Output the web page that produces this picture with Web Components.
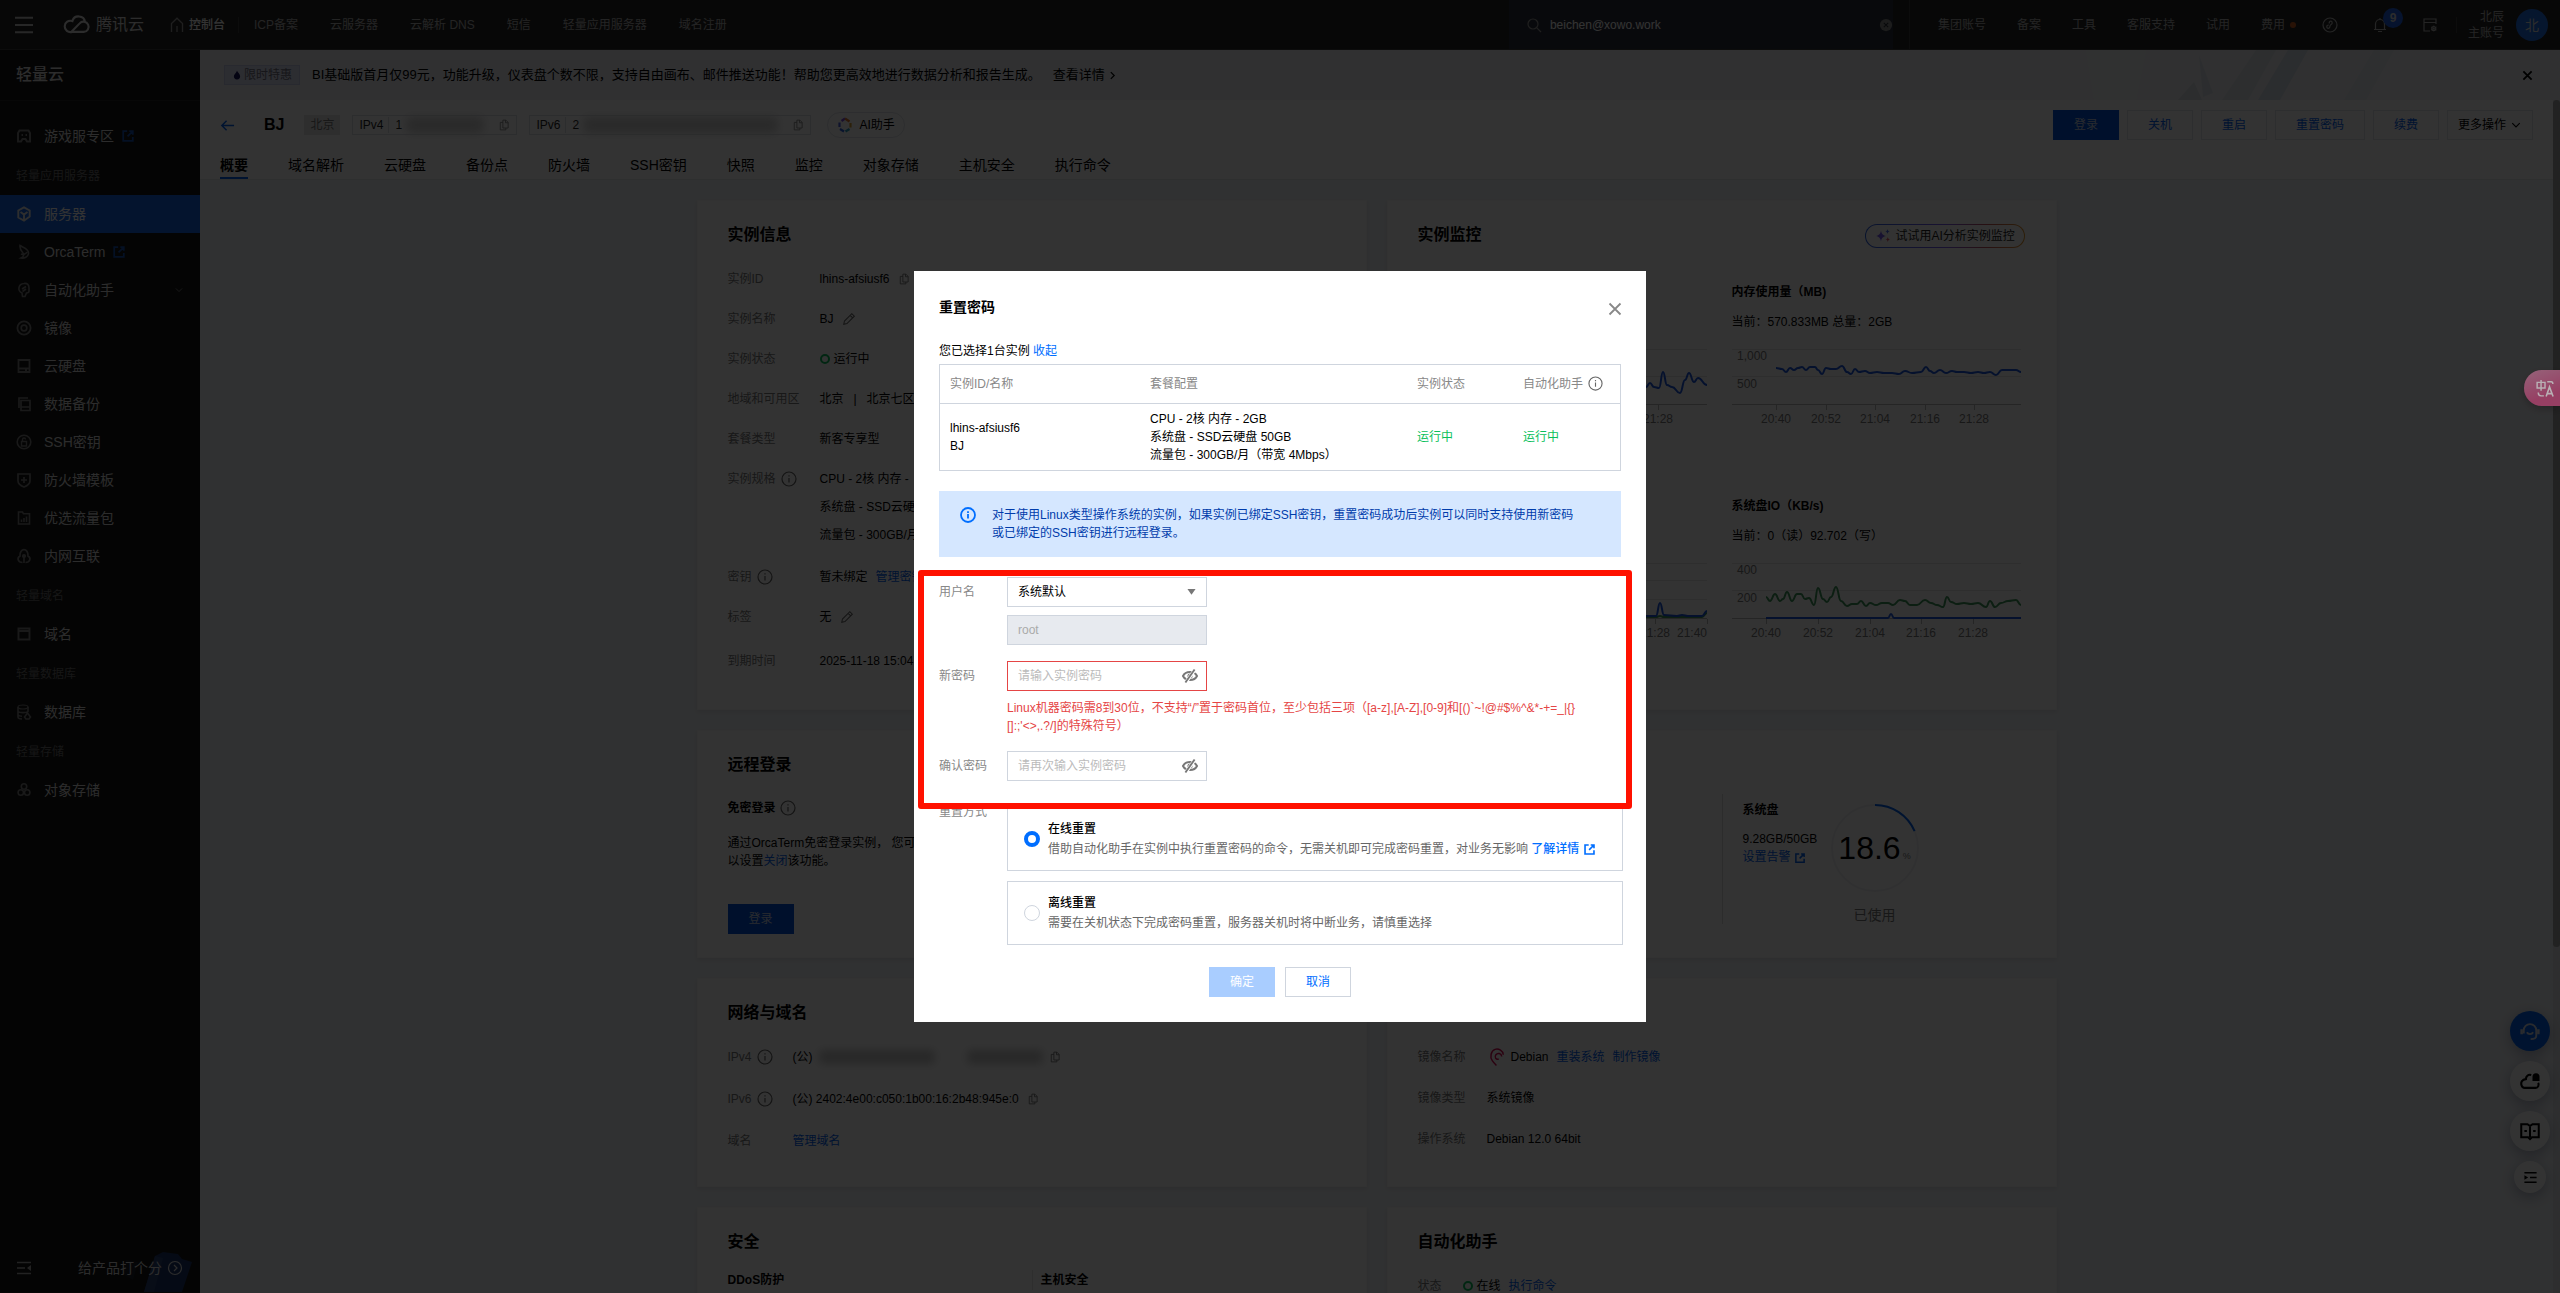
<!DOCTYPE html>
<html lang="zh-CN">
<head>
<meta charset="utf-8">
<title>轻量云 - 重置密码</title>
<style>
html,body{margin:0;height:100%;overflow:hidden}
body{font:12px/20px "Liberation Sans","Noto Sans CJK SC",sans-serif;color:#000;background:#f1f4f8}
</style>
</head>
<body>
<console-app></console-app>
<script>
const BASE = `<style>
*{box-sizing:border-box}
:host{display:block;box-sizing:border-box}
a{color:#0062f0;text-decoration:none}
button{font:inherit;cursor:pointer;margin:0}
h1,h2,h3,p,ul,dl,dd,dt{margin:0;padding:0}
ul{list-style:none}
</style>`;
function define(name, html, setup){
  const t = document.createElement('template');
  t.innerHTML = BASE + html;
  customElements.define(name, class extends HTMLElement{
    constructor(){ super(); this.attachShadow({mode:'open'}).append(t.content.cloneNode(true)); }
    connectedCallback(){ if(setup) setup(this, this.shadowRoot); }
  });
}

/* ---------- icons ---------- */
const ICONS = {
  menu:'<path d="M0 1.5h16M0 8h16M0 14.5h16" stroke-width="1.8"/>',
  home:'<path d="M2.5 15V6.5L8 1.2l5.500 5.300V15M8 9v6" stroke-width="1.3"/>',
  search:'<circle cx="7" cy="7" r="5"/><path d="M10.600 10.600L15 15"/>',
  clear:'<circle cx="8" cy="8" r="7" fill="currentColor" stroke="none"/><path d="M5.500 5.500l5 5M10.500 5.500l-5 5" stroke="#2a2e38"/>',
  compass:'<circle cx="8" cy="8" r="7"/><path d="M7.200 6.500V6c0-2.500 3-2.500 3 0 0 1.500-2.200 1.500-2.200 3 0 3-3.200 3-3.200.8 0-1.300 1-1.800 2-1.800"/>',
  bell:'<path d="M2 12.500h12M3.500 12.500V7a4.500 4.500 0 0 1 9 0v5.500M6 14.500h4M8 1v1.500"/>',
  order:'<path d="M14 7V2H2v12h6M2 5.500h12" /><circle cx="11.800" cy="11.500" r="2"/><path d="M11.800 8.500v6M9 10l5.500 3M14.500 10L9 13" stroke-width=".8"/>',
  fire:'<path d="M8 1c1 3 5 5 5 9a5 5 0 0 1-10 0c0-3 3.500-5 5-9z" fill="currentColor" stroke="none"/>',
  close:'<path d="M2.500 2.500l11 11M13.500 2.500l-11 11" stroke-width="1.800"/>',
  xbold:'<path d="M2 2l12 12M14 2L2 14" stroke-width="2.600"/>',
  back:'<path d="M15 8H2M7 3L2 8l5 5" stroke-width="1.600"/>',
  chev:'<path d="M3 5.500l5 5 5-5" stroke-width="1.500"/>',
  right:'<path d="M5 2l6 6-6 6" stroke-width="2.200"/>',
  copy:'<path d="M6.500 1.500H10.500L13.500 4.500v7.500H6.500zM10 1.500V5h3.500M6.500 4.500H3v10h7.500V12"/>',
  edit:'<path d="M2 14l.8-3.700L11.200 1.900l2.900 2.900-8.400 8.400zM9.300 3.800l2.900 2.900"/>',
  info:'<circle cx="8" cy="8" r="7"/><path d="M8 7v4.500M8 4.300v1.300"/>',
  infob:'<circle cx="8" cy="8" r="7" stroke-width="1.800"/><path d="M8 7v4.500M8 4.200V6" stroke-width="1.800"/>',
  ext:'<path d="M7 2.500H2.500v11h11V9M9.500 2.500h4v4M13.500 2.500L7.500 8.500" stroke-width="2"/>',
  eyeoff:'<path d="M1 8c2.500-5.300 11.500-5.300 14 0-2.500 5.300-11.500 5.300-14 0z" stroke-width="2"/><circle cx="8" cy="8" r="2" fill="currentColor"/><path d="M13 1.500L3.500 14.800" stroke="#fff" stroke-width="3.500"/><path d="M12.600 1.500L3.400 14.500" stroke-width="1.900"/>',
  down:'<path d="M3 5h10l-5 7z" fill="currentColor" stroke="none"/>',
  game:'<path d="M3.500 2.500h9L14 5v8.500h-3L9.500 11h-3L5 13.500H2V5z" stroke-width="2"/><path d="M5.500 7h1.500M9.500 7H11" stroke-width="2"/>',
  server:'<path d="M8 1.300l5.700 3.200v6L8 14.700l-5.700-3.200v-7zM4.500 6L8 8.500 11.500 6M8 8.500V15" stroke-width="1.900"/>',
  orca:'<path d="M4 1.500c3 2 9 3 8.500 8-.5 3.500-4 5-7.500 4.500 3-1.500 3-3 2-5C5.500 7.500 3.500 5 4 1.500zM5 10c2 1 5 0 6-2" stroke-width="1.600"/>',
  auto:'<path d="M8 1.500c3.500-.5 5 1.500 5 4.500v3c0 1.500-1 2-2.500 2L9 14.500H6.500L6 11C4 10 2.500 8 3 5.500 3.500 3 5.500 1.700 8 1.500zM6 7l4-2.500M6.500 9.500L10 7" stroke-width="1.600"/>',
  image:'<circle cx="8" cy="8" r="6.600" stroke-width="1.800"/><circle cx="8" cy="8" r="2.800" stroke-width="1.700"/>',
  disk:'<path d="M2.500 2h11v12h-11zM2.500 10.500h11M9 12.200h2" stroke-width="1.800"/>',
  backup:'<path d="M5 4.500h9v10H5zM5 11h9M3 12V2h9" stroke-width="1.700"/>',
  ssh:'<circle cx="8" cy="8" r="6.800" stroke-width="1.600"/><path d="M5.500 7.500h5V12h-5zM6.500 7.500V5.500a1.500 1.500 0 0 1 3 0" stroke-width="1.400"/>',
  wall:'<path d="M2 2h12v7c0 3-3.500 5-6 6-2.500-1-6-3-6-6zM8 5v6M5 8h6" stroke-width="1.700"/>',
  flow:'<path d="M2.500 2h4l1 1.800h6V14h-11zM5.500 9.500V12M8 8v4M10.500 6.500V12" stroke-width="1.600"/>',
  net:'<path d="M6.500 14.500C2 14.500.5 10 4 8 3.500-.5 12.500-.5 12 8c3.500 2 2 6.500-2.500 6.500M8 8v7" stroke-width="1.700"/><circle cx="8" cy="8" r="1.500" fill="currentColor"/>',
  domain:'<path d="M2.500 2.500h11v11h-11zM2.500 5h11" stroke-width="1.900"/>',
  db:'<ellipse cx="7" cy="3" rx="5" ry="2"/><path d="M2 3v10c0 1.500 2 2 4 2M2 7.500c1.500 1.500 8.500 1.500 10 0V3M2 11c1 1 2.500 1.200 4 1.200M11.500 9l3 4-1.500 2h-3l-1.500-2z" stroke-width="1.600"/>',
  cos:'<circle cx="8" cy="4.500" r="2.700" stroke-width="1.600"/><circle cx="4.800" cy="10.500" r="2.700" stroke-width="1.600"/><circle cx="11.200" cy="10.500" r="2.700" stroke-width="1.600"/>',
  collapse:'<path d="M1 2.500h14M1 8h8M1 13.500h14" stroke-width="1.600"/><path d="M15 5v6l-4-3z" fill="currentColor" stroke="none"/>',
  go:'<circle cx="8" cy="8" r="6.500"/><path d="M7 5l3 3-3 3"/>',
  cloud:'<path d="M9.800 22.500a7 7 0 1 1 .5-13.300 8 8 0 0 1 15.600 1.200M8.500 22.500h15.800a6.300 6.300 0 1 0-5-10.500L9.500 22" stroke-width="2.600"/>',
  head:'<path d="M3 10V7.500a5 5 0 0 1 10 0V12c0 1.500-1 2.500-4.500 2.500M5.500 9c1 2 4 2 5 0" stroke-width="1.500"/><path d="M1.300 6.500v4M14.700 6.500v4" stroke-width="2"/>',
  cbell:'<path d="M9 3.200C6.500 2.500 4.700 4.300 4.700 6.500 1.500 6.800.8 9 1 10.500 1.300 13 3 13.500 4 13.500h8.500c2 0 3-2.500 2-4" stroke-width="1.700"/><path d="M10 8V4.500a2.800 2.800 0 0 1 5.600 0V8z" fill="currentColor" stroke="none"/>',
  book:'<path d="M1 2.500h5L8 4l2-1.500h5V13H9.500L8 14.500 6.500 13H1zM8 4v9M3.500 8h2M10.500 8h2" stroke-width="1.600"/>',
  list:'<path d="M1.500 3h13M7.500 8h7M1.500 13h13" stroke-width="1.600"/><path d="M1.500 5.500v5L5.500 8z" fill="currentColor" stroke="none"/>',
  debian:'<path d="M9.500 9.800C7 10.500 5.500 8 7 6c1.500-2 5-1.300 5.200 1.500M13.600 6C13.500 2.500 9.500 .2 6.300 1.200 2.500 2.600 1.500 8 3.800 11.200 5 13 6 14 7.500 15.500" stroke="#d70a53" stroke-width="1.300"/>',
  translate:'<path d="M1 3h7v5H1zM4.500 .8V10.500M10 2.500h3.500c1 0 1.500.5 1.500 2M2 12c0 2 1 3 2.500 3H7" stroke-width="1.300"/><path d="M9 15.500l3-8.500 3.200 8.500M10 13h4.200" stroke-width="1.400"/>',
  spark:'<path d="M6 2.500c.6 3.500 1.800 4.700 5 5.500-3.200.8-4.400 2-5 5.500C5.400 10 4.200 8.800 1 8c3.200-.8 4.400-2 5-5.500z" fill="#7a5cf0" stroke="none"/><path d="M12.500 1c.3 1.600.8 2.100 2.300 2.500-1.500.4-2 .9-2.300 2.500-.3-1.600-.8-2.100-2.300-2.500 1.500-.4 2-.9 2.300-2.500z" fill="#4a6cf0" stroke="none"/><path d="M12.800 9c.3 1.600.8 2.100 2.300 2.500-1.500.4-2 .9-2.300 2.500-.3-1.600-.8-2.100-2.300-2.500 1.500-.4 2-.9 2.300-2.500z" fill="#e0566c" stroke="none"/>',
  ai:'<g stroke-width="2.200"><path d="M8 1.500L4.500 4" stroke="#7a4ce0"/><path d="M8 1.500L12.500 4.500" stroke="#e07830"/><path d="M13.500 6v4.500" stroke="#e0a030"/><path d="M12.500 12L8.500 14.500" stroke="#30a0c0"/><path d="M7 14.500L3 12" stroke="#2a60e0"/><path d="M2.500 10V5.500" stroke="#4a60e0"/></g>'
};
define('ui-icon', `<style>
:host{display:inline-flex;flex:none;width:var(--s,16px);height:var(--s,16px);vertical-align:middle}
svg{width:100%;height:100%;display:block;overflow:visible}
</style><svg viewBox="0 0 16 16" fill="none" stroke="currentColor" stroke-width="1.2" aria-hidden="true"></svg>`,
(el,root)=>{ const s=root.querySelector('svg'), n=el.getAttribute('name');
  if(n==='cloud') s.setAttribute('viewBox','0 2 32 24');
  s.innerHTML=ICONS[n]||''; });

/* ---------- top bar ---------- */
define('top-bar', `<style>
:host{height:50px;flex:none;background:#262626;color:#b4b4b4;border-bottom:1px solid #3c3c3c}
.bar{display:flex;align-items:center;height:100%;padding-right:12px}
.bar a{color:inherit}
.menu{border:0;background:none;padding:0;color:#c4c4c4;margin:0 31px 0 15px;display:flex;--s:18px}
.logo{display:flex;align-items:center;gap:6px;color:#dcdcdc;font-size:16px}
.logo ui-icon{--s:26px}
.home{display:flex;align-items:center;gap:4px;margin-left:25px;color:#fff;padding-right:13px;border-right:1px solid #3c3c3c;line-height:16px}
.home a{font-weight:500}
.home ui-icon{color:#999}
nav{display:flex;gap:32px;padding-left:15px}
.search{margin-left:auto;width:384px;height:100%;background:#2c303c;display:flex;align-items:center;gap:8px;padding:0 0 0 17px;color:#999}
.search input{flex:1;min-width:0;border:0;background:none;color:#fff;font:inherit;padding:0;outline:0}
.search button{border:0;padding:0;background:none;color:#8c8c8c;display:flex;--s:14px}
.tools{display:flex;margin-left:16px;border-left:1px solid #3c3c3c;height:100%;align-items:center;padding-left:28px;gap:31px}
.fee{display:flex;align-items:center;gap:5px}
.fee i{width:6px;height:6px;border-radius:50%;background:#c85a1e}
.ico{display:flex;align-items:center;gap:34px;margin-left:-5px}
.bellbox{position:relative;display:flex}
.bellbox b{position:absolute;left:11px;top:-9px;width:20px;height:20px;border-radius:50%;background:#1e62e6;color:#dcdcdc;text-align:center}
.sep{width:1px;height:16px;background:#3c3c3c;margin-left:-13px}
.acct{display:flex;align-items:center;gap:12px;margin-left:-20px}
.acct p{line-height:16px;text-align:right}
.avatar{width:32px;height:32px;border-radius:50%;background:#1e6ee6;color:#dcdcdc;font-size:14px;line-height:32px;text-align:center}
</style>
<div class="bar">
<button class="menu" aria-label="菜单"><ui-icon name="menu"></ui-icon></button>
<div class="logo"><ui-icon name="cloud"></ui-icon><span>腾讯云</span></div>
<div class="home"><ui-icon name="home"></ui-icon><a href="#">控制台</a></div>
<nav><a href="#">ICP备案</a><a href="#">云服务器</a><a href="#">云解析 DNS</a><a href="#">短信</a><a href="#">轻量应用服务器</a><a href="#">域名注册</a></nav>
<div class="search"><ui-icon name="search"></ui-icon><input aria-label="搜索" value="beichen@xowo.work"><button aria-label="清除"><ui-icon name="clear"></ui-icon></button></div>
<div class="tools"><a href="#">集团账号</a><a href="#">备案</a><a href="#">工具</a><a href="#">客服支持</a><a href="#">试用</a><a href="#" class="fee">费用 <i></i></a>
<div class="ico"><ui-icon name="compass"></ui-icon><span class="bellbox"><ui-icon name="bell"></ui-icon><b>9</b></span><ui-icon name="order"></ui-icon></div>
<span class="sep"></span>
<div class="acct"><p>北辰<br>主账号</p><span class="avatar">北</span></div></div>
</div>`);

/* ---------- side navigation ---------- */
define('nav-item', `<style>
a{display:flex;align-items:center;height:38px;padding:0 16px;gap:12px;font-size:14px;color:#dcdcdc}
ui-icon{color:#7d7d7d}
:host([active]) a{background:#1464e6;color:#fff}
:host([active]) ui-icon{color:#e6e6e6}
.x{color:#1450b4;--s:14px;margin-left:-5px}
.d{--s:10px;margin-left:auto}
</style><a href="#"><ui-icon class="i"></ui-icon><slot></slot></a>`,
(el,root)=>{ if(root.done) return; root.done=1;
  const a=root.querySelector('a'), i=document.createElement('ui-icon');
  i.setAttribute('name',el.getAttribute('icon')); root.querySelector('.i').replaceWith(i);
  for(const [at,n,c] of [['external','ext','x'],['expandable','chev','d']]) if(el.hasAttribute(at)){
    const k=document.createElement('ui-icon'); k.setAttribute('name',n); k.className=c; a.append(k); }
});
define('side-nav', `<style>
:host{width:200px;flex:none;background:#161616;display:flex;flex-direction:column;overflow:hidden}
h2{height:51px;padding:15px 16px;font-size:16px;line-height:20px;font-weight:500;color:#dcdcdc;border-bottom:1px solid #262626}
nav{padding-top:16px;flex:1}
h3{font-size:12px;font-weight:normal;line-height:38px;padding:2px 16px 0;color:#6e6e6e}
footer{position:relative;height:50px;display:flex;align-items:center;gap:46px;padding:0 16px;color:#aaa;border-bottom:1px solid #282020}
footer svg{position:absolute;right:0;bottom:0;width:90px;height:40px}
footer a{position:relative;color:#dcdcdc;font-size:14px;display:flex;align-items:center;gap:5px}
</style>
<h2>轻量云</h2>
<nav>
<nav-item icon="game" external>游戏服专区</nav-item>
<h3>轻量应用服务器</h3>
<nav-item icon="server" active>服务器</nav-item>
<nav-item icon="orca" external>OrcaTerm</nav-item>
<nav-item icon="auto" expandable>自动化助手</nav-item>
<nav-item icon="image">镜像</nav-item>
<nav-item icon="disk">云硬盘</nav-item>
<nav-item icon="backup">数据备份</nav-item>
<nav-item icon="ssh">SSH密钥</nav-item>
<nav-item icon="wall">防火墙模板</nav-item>
<nav-item icon="flow">优选流量包</nav-item>
<nav-item icon="net">内网互联</nav-item>
<h3>轻量域名</h3>
<nav-item icon="domain">域名</nav-item>
<h3>轻量数据库</h3>
<nav-item icon="db">数据库</nav-item>
<h3>轻量存储</h3>
<nav-item icon="cos">对象存储</nav-item>
</nav>
<footer><svg viewBox="0 0 90 40" aria-hidden="true"><path d="M16 8l12 2-5 18-10-6z" fill="#1c1f28"/><path d="M34 40L45 4l8-4 15 2 4 5 10 3-10 30z" fill="#1c3468"/><path d="M34 40L45 4l8 2-9 34z" fill="#2a4276"/></svg>
<ui-icon name="collapse"></ui-icon><a href="#">给产品打个分 <ui-icon name="go"></ui-icon></a></footer>`);

/* ---------- promo banner ---------- */
define('promo-banner', `<style>
:host{height:50px;flex:none;background:#edf0f6;display:flex;align-items:center;padding:0 24px;font-size:13px;gap:12px}
.tag{display:flex;align-items:center;gap:2px;height:20px;width:76px;padding:0 7px;border:1px solid #c8cdeb;background:#dcdff2;color:#6f7080;font-size:12px;white-space:nowrap}
.tag ui-icon{--s:10px;color:#14145a}
.more{color:#000;display:flex;align-items:center;gap:3px;--s:9px}
.art{margin-left:auto;width:366px;height:50px}
button{border:0;background:none;padding:0;display:flex;--s:11px;color:#000;margin:0 3px 0 110px}
</style>
<span class="tag"><ui-icon name="fire"></ui-icon>限时特惠</span>
<span>BI基础版首月仅99元，功能升级，仪表盘个数不限，支持自由画布、邮件推送功能！帮助您更高效地进行数据分析和报告生成。</span>
<a class="more" href="#">查看详情 <ui-icon name="right"></ui-icon></a>
<svg class="art" viewBox="0 0 366 50" aria-hidden="true"><path d="M0 0h366v50H0z" fill="#eef1f3"/><path d="M52 0h60l-10 50H60z" fill="#eef3f6"/><path d="M165 5l14 38-10 4z" fill="#dde2ea"/><path d="M144 50l16-18 8 18z" fill="#dbdfe6"/><path d="M188 50L222 0h20l-28 50z" fill="#e2e6ec"/><path d="M224 50L254 0h20l-28 50z" fill="#d7dee8"/><path d="M310 50L340 0h20l-28 50z" fill="#e6e9ee"/></svg>
<button aria-label="关闭"><ui-icon name="xbold"></ui-icon></button>`);

/* ---------- instance header ---------- */
define('instance-head', `<style>
:host{background:#fff;height:80px;flex:none;padding:10px 20px 0;border-bottom:1px solid #e6e8ec}
.row{display:flex;align-items:center;height:30px}
.back{display:flex;--s:15px}
h1{font-size:16px;line-height:24px;margin:0 20px 0 29px}
.tag{background:#e6e6e6;color:#777;height:20px;padding:0 6px;width:36px;white-space:nowrap}
.chip{display:flex;align-items:center;height:20px;border:1px solid #dcdfe5;margin-left:12px;padding:0 6px;width:165px;color:#1e1e1e;line-height:16px}
.chip.w{width:282px}
.chip span{border-right:1px solid #dcdfe5;padding-right:5px;margin-right:6px}
.chip i{height:16px;flex:1;background:#d0d0d0;filter:blur(4px);margin:0 14px 0 4px;border-radius:6px}
.chip ui-icon{--s:12px;color:#888}
.ai{display:flex;align-items:center;gap:6px;height:26px;border:1px solid #dfe2e8;border-radius:13px;margin-left:16px;padding:0 9px;background:none;color:#000}
.btns{margin-left:auto;display:flex;gap:8px}
.btns button{height:30px;min-width:66px;padding:0 20px;border:1px solid #e1e4ea;background:#fff;color:#0062f0}
.btns .p{background:#0052d9;border-color:#0052d9;color:#c8d4ea}
.btns .m{color:#000;display:flex;align-items:center;gap:4px;padding:0 10px;--s:12px}
nav{display:flex;gap:40px;height:39px;font-size:14px}
nav a{color:#000;line-height:30px;padding-top:10px}
nav a.on{font-weight:bold;border-bottom:2px solid #0062f0}
</style>
<div class="row"><a class="back" href="#" aria-label="返回"><ui-icon name="back"></ui-icon></a><h1>BJ</h1><span class="tag">北京</span>
<div class="chip"><span>IPv4</span>1<i></i><ui-icon name="copy"></ui-icon></div>
<div class="chip w"><span>IPv6</span>2<i></i><ui-icon name="copy"></ui-icon></div>
<button class="ai"><ui-icon name="ai"></ui-icon>AI助手</button>
<div class="btns"><button class="p">登录</button><button>关机</button><button>重启</button><button>重置密码</button><button>续费</button><button class="m">更多操作<ui-icon name="chev"></ui-icon></button></div></div>
<nav><a class="on" href="#">概要</a><a href="#">域名解析</a><a href="#">云硬盘</a><a href="#">备份点</a><a href="#">防火墙</a><a href="#">SSH密钥</a><a href="#">快照</a><a href="#">监控</a><a href="#">对象存储</a><a href="#">主机安全</a><a href="#">执行命令</a></nav>`);

/* ---------- cards ---------- */
define('info-card', `<style>
:host{background:#fff;border:1px solid #f7f8fa;padding:22px 30px 0;box-shadow:0 2px 4px rgba(54,58,80,.1);min-width:0}
header{display:flex;justify-content:space-between;height:23px}
h2{font-size:16px;line-height:24px}
</style><header><h2></h2><slot name="action"></slot></header><slot></slot>`,
(el,root)=>{ root.querySelector('h2').textContent=el.getAttribute('heading')||''; });
define('kv-row', `<style>
:host{display:flex;--s:16px}
.k{width:var(--k,92px);flex:none;color:#777;display:flex;align-items:center;gap:5px;height:var(--h,40px)}
.k ui-icon{color:#666}
.v{display:flex;align-items:center;min-height:var(--h,40px);white-space:nowrap}
</style><span class="k"></span><div class="v"><slot></slot></div>`,
(el,root)=>{ const k=root.querySelector('.k'); k.textContent=el.getAttribute('label');
  if(el.hasAttribute('hint')){ const i=document.createElement('ui-icon'); i.setAttribute('name','info'); k.append(i);} });

/* ---------- charts ---------- */
const smooth = s => { const p=s.split(' ').map(q=>q.split(',').map(Number)); let d='M'+p[0];
  for(let i=1;i<p.length;i++){ const m=(p[i-1][0]+p[i][0])/2; d+=`C${m},${p[i-1][1]} ${m},${p[i][1]} ${p[i]}`; } return d; };
define('trend-chart', `<style>
:host{height:148px}
h3{font-size:12px;line-height:20px;height:20px}
p{line-height:20px;height:20px;margin:10px 0 13px}
svg{display:block;width:290px;height:85px;overflow:visible}
text{font-size:12px;fill:#777}
</style><h3></h3><p></p><svg viewBox="0 0 290 85"></svg>`,
(el,root)=>{ const g=n=>el.getAttribute(n)||'';
  root.querySelector('h3').textContent=g('heading'); root.querySelector('p').textContent=g('now');
  let h=''; for(const y of g('grid').split(' ')) h+=`<path d="M0 ${y}.5H289" stroke="#e6e6e6"/>`;
  h+='<path d="M0 59.5H289" stroke="#bbb"/>';
  g('ylab').split(' ').filter(Boolean).forEach((t,i)=>h+=`<text x="5" y="${15+i*28}">${t}</text>`);
  for(const t of g('ticks').split(' ')){ const [x,l]=t.split('@'), e=+x>280;
    h+=`<path d="M${x}.5 60v5" stroke="#bbb"/><text x="${x}" y="78" text-anchor="${e?'end':'middle'}">${l}</text>`; }
  if(g('green')) h+=`<path d="${smooth(g('green'))}" fill="none" stroke="#3c965a" stroke-width="2"/>`;
  h+=`<path d="${smooth(g('blue'))}" fill="none" stroke="#1c58e0" stroke-width="2"/>`;
  root.querySelector('svg').innerHTML=h; });

define('usage-ring', `<style>
:host{position:relative;width:90px;text-align:center}
svg{display:block;width:90px;height:90px}
strong{position:absolute;inset:0 0 auto;line-height:90px;font-size:32px;font-weight:normal;color:#000;white-space:nowrap}
small{font-size:9px;color:#777;margin-left:2px}
p{font-size:14px;color:#777;margin-top:12px}
</style><svg viewBox="0 0 90 90" fill="none" aria-hidden="true"><circle cx="45" cy="45" r="43" stroke="#f0f1f3" stroke-width="2"/><path d="M45 2A43 43 0 0 1 84.600 28.200" stroke="#0062f0" stroke-width="2"/></svg>
<strong>18.6<small>%</small></strong><p><slot></slot></p>`);

define('instance-board', `<style>
:host{flex:1;min-height:0;overflow:hidden;padding:20px 0 0;display:flex;align-items:flex-start;justify-content:center}
.grid{display:grid;grid-template-columns:minmax(0,1fr) minmax(0,1fr);gap:20px;width:100%;max-width:1360px}
.base{padding-bottom:28px}
.first{margin-top:13px}
.st{display:inline-block;width:10px;height:10px;border:2px solid #0abf5b;border-radius:50%;margin-right:4px}
.spec{line-height:28px;padding:6px 0 8px}
.last{margin-top:4px}
.sp{margin-left:8px}
.cp{color:#777;--s:12px}
.ed{color:#666;--s:14px;margin-left:8px}
.aibtn{height:24px;width:160px;margin:1px 1px 0 0;padding:0 9px;border:1px solid transparent;border-radius:12px;background:linear-gradient(#fff,#fff) padding-box,linear-gradient(90deg,#2a60e0,#7a5cf0 50%,#c0505c 75%,#e0962c) border-box;color:#1e1e1e;display:flex;align-items:center;gap:5px;white-space:nowrap;line-height:20px}
.charts{display:grid;grid-template-columns:1fr 1fr;gap:66px 24px;margin-top:36px;padding-right:4px}
.login h3{font-size:12px;display:flex;align-items:center;gap:4px;margin-top:22px}
.login h3 ui-icon{color:#666}
.login p{line-height:18px;white-space:nowrap;overflow:hidden;margin:16px 0 0}
.login p+p{margin:0 0 34px}
.login button{display:block;width:66px;height:30px;border:0;background:#0052d9;color:#c8d4ea;margin-bottom:23px}
.quota{display:flex;margin:18px 0 0 304px;padding-left:20px;border-left:1px solid #dcdcdc;height:130px;gap:11px}
.quota div{width:76px;padding-top:7px;line-height:18px;white-space:nowrap}
.quota b{display:block;margin-bottom:11px}
.quota div a{--s:12px}
.quota usage-ring{margin-top:9px}
.blur{display:inline-block;height:14px;background:#c6c6c6;filter:blur(4px);width:116px;border-radius:5px;margin-left:6px}
.blur.b{width:76px;margin:0 6px 0 32px}
.net,.img{display:block;margin:12px 0 24px}
.net{--k:65px;--h:42px}
.img{--k:69px;--h:41px}
.db{margin:0 5px 0 1px;--s:18px}
.sec{display:flex;margin-top:17px;padding-bottom:60px;font-weight:bold}
.sec span{width:304px}
.sec span+span{padding-left:8px;border-left:1px solid #e6e6e6}
.agent{--k:45px;display:block;margin-top:13px}
.gap{white-space:pre}
</style>
<div class="grid">
<info-card class="base" heading="实例信息">
 <kv-row class="first" label="实例ID">lhins-afsiusf6 <ui-icon class="cp sp" name="copy"></ui-icon></kv-row>
 <kv-row label="实例名称">BJ <ui-icon class="ed" name="edit"></ui-icon></kv-row>
 <kv-row label="实例状态"><span class="st"></span>运行中</kv-row>
 <kv-row label="地域和可用区"><span class="gap">北京   |   北京七区</span></kv-row>
 <kv-row label="套餐类型">新客专享型</kv-row>
 <kv-row label="实例规格" hint><div class="spec">CPU - 2核 内存 -<br>系统盘 - SSD云硬盘<br>流量包 - 300GB/月</div></kv-row>
 <kv-row label="密钥" hint>暂未绑定 <a class="sp" href="#">管理密钥</a></kv-row>
 <kv-row label="标签">无 <ui-icon class="ed" name="edit"></ui-icon></kv-row>
 <kv-row class="last" label="到期时间">2025-11-18 15:04</kv-row>
</info-card>
<info-card heading="实例监控">
 <button class="aibtn" slot="action"><ui-icon name="spark"></ui-icon>试试用AI分析实例监控</button>
 <div class="charts">
 <trend-chart grid="4 31" ticks="240@21:28" blue="228,42 232,38 236,42 241,43 245,27 249,40 254,42 262,48 267,35 271,28 276,37 280,33 289,40"></trend-chart>
 <trend-chart heading="内存使用量（MB)" now="当前：570.833MB 总量：2GB" grid="4 31" ylab="1,000 500" ticks="44@20:40 94@20:52 143@21:04 193@21:16 242@21:28" blue="44,23 50,24 54,27 58,23 62,25 66,23 70,22 74,25 78,22 83,22 86,25 90,29 94,23 99,24 104,24 110,21 115,27 119,29 123,24 127,27 133,26 138,28 145,27 152,28 160,28 167,29 173,26 180,28 189,27 194,22 198,26 202,28 208,25 214,28 220,26 225,27 232,27 239,28 246,27 252,28 258,27 264,30 270,25 278,25 284,25 289,27"></trend-chart>
 <trend-chart grid="4 21 40" ticks="237@21:28 289@21:40" green="228,58 238,58 242,57 246,58 284,58 289,54" blue="228,57 238,57 242,44 246,56 259,57 264,56 270,57 284,57 289,52"></trend-chart>
 <trend-chart heading="系统盘IO（KB/s)" now="当前：0（读）92.702（写）" grid="4 31" ylab="400 200" ticks="34@20:40 86@20:52 138@21:04 189@21:16 241@21:28" green="34,38 38,42 43,35 48,42 51,40 55,33 60,42 65,35 69,35 73,40 77,39 82,46 86,29 91,40 95,43 99,38 104,28 109,42 115,47 120,45 125,45 129,42 134,47 138,44 144,46 150,44 156,44 161,46 168,41 173,42 178,46 185,46 193,41 199,44 205,46 211,48 215,38 219,43 225,45 232,44 239,45 246,44 254,48 258,42 263,48 269,44 276,42 284,41 289,46" blue="34,59 156,59 159,55 162,59 289,59"></trend-chart>
 </div>
</info-card>
<info-card class="login" heading="远程登录">
 <h3>免密登录 <ui-icon name="info"></ui-icon></h3>
 <p>通过OrcaTerm免密登录实例， 您可</p><p>以设置<a href="#">关闭</a>该功能。</p>
 <button>登录</button>
</info-card>
<info-card>
 <div class="quota"><div><b>系统盘</b>9.28GB/50GB<br><a href="#">设置告警 <ui-icon name="ext"></ui-icon></a></div><usage-ring>已使用</usage-ring></div>
</info-card>
<info-card heading="网络与域名"><div class="net">
 <kv-row label="IPv4" hint>(公) <i class="blur"></i><i class="blur b"></i><ui-icon class="cp" name="copy"></ui-icon></kv-row>
 <kv-row label="IPv6" hint>(公) 2402:4e00:c050:1b00:16:2b48:945e:0 <ui-icon class="cp sp" name="copy"></ui-icon></kv-row>
 <kv-row label="域名"><a href="#">管理域名</a></kv-row></div>
</info-card>
<info-card><div class="img">
 <kv-row label="镜像名称"><ui-icon class="db" name="debian"></ui-icon>Debian <a class="sp" href="#">重装系统</a> <a class="sp" href="#">制作镜像</a></kv-row>
 <kv-row label="镜像类型">系统镜像</kv-row>
 <kv-row label="操作系统">Debian 12.0 64bit</kv-row></div>
</info-card>
<info-card heading="安全"><div class="sec"><span>DDoS防护</span><span>主机安全</span></div></info-card>
<info-card heading="自动化助手"><div class="agent"><kv-row label="状态"><span class="st"></span>在线 <a class="sp" href="#">执行命令</a></kv-row></div></info-card>
</div>`);

/* ---------- floating tools ---------- */
define('float-tools', `<style>
:host{position:fixed;right:10px;bottom:100px;display:flex;flex-direction:column;align-items:center;gap:10px}
button{width:40px;height:40px;border-radius:50%;border:0;padding:0;background:#fff;color:#000;display:flex;align-items:center;justify-content:center;box-shadow:0 4px 14px rgba(40,50,90,.35);--s:20px}
.p{background:#0062f0;color:#d0d8e6}
.s{width:32px;height:32px;--s:15px}
</style><button class="p" aria-label="客服"><ui-icon name="head"></ui-icon></button><button aria-label="通知"><ui-icon name="cbell"></ui-icon></button><button aria-label="文档"><ui-icon name="book"></ui-icon></button><button class="s" aria-label="收起"><ui-icon name="list"></ui-icon></button>`);
define('translate-tab', `<style>
:host{position:fixed;right:0;top:370px}
button{width:36px;height:36px;border:0;padding:0 0 0 12px;border-radius:18px 0 0 18px;background:linear-gradient(160deg,#96637a,#963f63 70%);color:#b9b0b4;display:flex;align-items:center;--s:18px;box-shadow:0 3px 8px rgba(0,0,0,.25)}
</style><button aria-label="翻译"><ui-icon name="translate"></ui-icon></button>`);

/* ---------- reset password dialog ---------- */
define('reset-dialog', `<style>
:host{position:fixed;inset:0;background:rgba(0,0,0,.8);display:flex;align-items:center;justify-content:center}
section{background:#fff;width:732px;padding:26px 25px 25px}
a{color:#006eff}
header{display:flex;justify-content:space-between;align-items:center;height:20px;margin-bottom:24px}
h2{font-size:14px;line-height:20px}
header button{border:0;background:none;padding:0;color:#888;display:flex;--s:16px;margin-top:4px;margin-right:-2px}
table{width:100%;border:1px solid #cfd5de;border-spacing:0;table-layout:fixed;margin-top:3px;line-height:18px}
th,td{text-align:left;padding:0 10px;font-weight:normal;white-space:nowrap}
th{height:39px;color:#888;border-bottom:1px solid #cfd5de}
th ui-icon{color:#666;--s:15px;margin:-2px 0 0 2px}
td{height:66px}
.c1{width:200px}
.c3{width:106px}
.c4{width:107px}
.ok{color:#0abf5b}
.tip{display:flex;gap:16px;background:#d5e7ff;color:#003cab;padding:15px 44px 15px 21px;margin-top:20px;line-height:18px}
.tip ui-icon{color:#006eff;margin-top:1px}
.mark{position:relative;margin-top:20px}
.mark::after{content:"";position:absolute;inset:-7px -11px -28px -21px;border:6px solid #ff1100;border-radius:3px;pointer-events:none}
.f{display:grid;grid-template-columns:68px minmax(0,1fr);margin-top:16px}
.mark .f:first-child{margin-top:0}
.lab{color:#888;line-height:30px}
.ctl{display:flex;flex-direction:column;gap:8px}
.box{position:relative;width:200px;display:flex}
.box ui-icon{position:absolute;right:9px;top:7px;color:#777;pointer-events:none}
.box .dn{--s:13px;top:8px}
input:not([type=radio]),select{width:100%;height:30px;border:1px solid #cfd5de;border-radius:0;padding:0 10px;font:inherit;background:#fff;color:#000;appearance:none;outline:0}
input:disabled{background:#e7eaef!important;color:#aaa!important}
input::placeholder{color:#bbb;opacity:1}
.bad{border-color:#e54545!important}
.err{color:#e54545;line-height:18px;width:574px}
.opts{display:flex;flex-direction:column;gap:10px;padding-top:10px}
.opt{display:flex;align-items:center;gap:8px;height:64px;border:1px solid #cfd5de;padding:0 16px;color:#666;margin-right:-2px}
.opt b{display:block;color:#000;font-weight:500}
.opt a{font-weight:500;--s:13px}
.opt input{appearance:none;width:16px;height:16px;margin:0;border:1px solid #cfd5de;border-radius:50%}
.opt input:checked{border:4px solid #006eff}
footer{display:flex;justify-content:center;gap:10px;margin-top:22px}
footer button{width:66px;height:30px;border:1px solid #cfd5de;background:#fff;color:#006eff;padding:0}
footer .p{background:#a9cdff;border-color:#a9cdff;color:#fff}
</style>
<section role="dialog" aria-labelledby="t">
<header><h2 id="t">重置密码</h2><button aria-label="关闭"><ui-icon name="close"></ui-icon></button></header>
<p>您已选择1台实例 <a href="#">收起</a></p>
<table><colgroup><col class="c1"><col><col class="c3"><col class="c4"></colgroup>
<thead><tr><th>实例ID/名称</th><th>套餐配置</th><th>实例状态</th><th>自动化助手 <ui-icon name="info"></ui-icon></th></tr></thead>
<tbody><tr><td>lhins-afsiusf6<br>BJ</td><td>CPU - 2核 内存 - 2GB<br>系统盘 - SSD云硬盘 50GB<br>流量包 - 300GB/月（带宽 4Mbps）</td><td class="ok">运行中</td><td class="ok">运行中</td></tr></tbody></table>
<div class="tip"><ui-icon name="infob"></ui-icon><span>对于使用Linux类型操作系统的实例，如果实例已绑定SSH密钥，重置密码成功后实例可以同时支持使用新密码或已绑定的SSH密钥进行远程登录。</span></div>
<form>
<div class="mark">
<div class="f"><label class="lab" for="u">用户名</label><div class="ctl"><div class="box"><select id="u"><option>系统默认</option></select><ui-icon class="dn" name="down"></ui-icon></div><div class="box"><input aria-label="用户名" value="root" disabled></div></div></div>
<div class="f"><label class="lab" for="p1">新密码</label><div class="ctl"><div class="box"><input id="p1" class="bad" type="password" placeholder="请输入实例密码"><ui-icon name="eyeoff"></ui-icon></div>
<p class="err">Linux机器密码需8到30位，不支持“/”置于密码首位，至少包括三项（[a-z],[A-Z],[0-9]和[()\`~!@#$%^&amp;*-+=_|{}<wbr>[]:;'&lt;&gt;,.?/]的特殊符号）</p></div></div>
<div class="f"><label class="lab" for="p2">确认密码</label><div class="ctl"><div class="box"><input id="p2" type="password" placeholder="请再次输入实例密码"><ui-icon name="eyeoff"></ui-icon></div></div></div>
</div>
<div class="f"><span class="lab">重置方式</span><div class="opts">
<div class="opt"><input type="radio" name="m" id="m1" checked><label for="m1"><b>在线重置</b>借助自动化助手在实例中执行重置密码的命令，无需关机即可完成密码重置，对业务无影响 <a href="#">了解详情 <ui-icon name="ext"></ui-icon></a></label></div>
<div class="opt"><input type="radio" name="m" id="m2"><label for="m2"><b>离线重置</b>需要在关机状态下完成密码重置，服务器关机时将中断业务，请慎重选择</label></div>
</div></div>
<footer><button class="p" type="button">确定</button><button type="button">取消</button></footer>
</form></section>`);

define('console-app', `<style>
:host{height:100vh;display:flex;flex-direction:column;overflow:hidden}
.body{flex:1;display:flex;min-height:0}
main{flex:1;min-width:0;display:flex;flex-direction:column}
.view{flex:1;min-height:0;display:flex}
.page{flex:1;min-width:0;display:flex;flex-direction:column}
.bar{width:7px;background:#e4e6ea}
.bar i{display:block;height:71%;background:#a8a8a8;border-radius:4px}
</style>
<top-bar></top-bar>
<div class="body"><side-nav></side-nav><main><promo-banner></promo-banner><div class="view"><div class="page"><instance-head></instance-head><instance-board></instance-board></div><div class="bar"><i></i></div></div></main></div>
<float-tools></float-tools><reset-dialog></reset-dialog><translate-tab></translate-tab>`);
</script>
</body>
</html>
